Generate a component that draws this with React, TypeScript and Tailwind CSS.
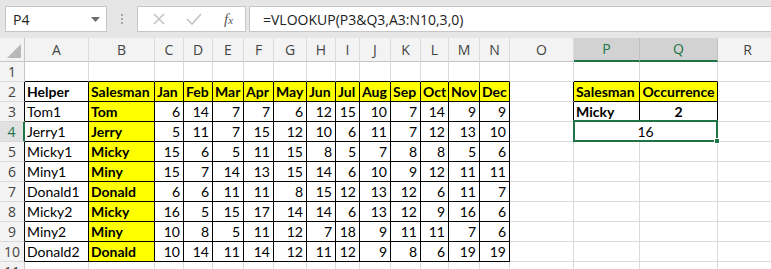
import React from "react";
import clsx from "clsx";

// sheet columns with pixel widths (index 0 is the row header)
const COLS = ["", "A", "B", "C", "D", "E", "F", "G", "H", "I", "J", "K", "L", "M", "N", "O", "P", "Q", "R"];
const MONTHS = ["Jan", "Feb", "Mar", "Apr", "May", "Jun", "Jul", "Aug", "Sep", "Oct", "Nov", "Dec"];

const DATA: [string, string, number[]][] = [
  ["Tom1", "Tom", [6, 14, 7, 7, 6, 12, 15, 10, 7, 14, 9, 9]],
  ["Jerry1", "Jerry", [5, 11, 7, 15, 12, 10, 6, 11, 7, 12, 13, 10]],
  ["Micky1", "Micky", [15, 6, 5, 11, 15, 8, 5, 7, 8, 8, 5, 6]],
  ["Miny1", "Miny", [15, 7, 14, 13, 15, 14, 6, 10, 9, 12, 11, 11]],
  ["Donald1", "Donald", [6, 6, 11, 11, 8, 15, 12, 13, 12, 6, 11, 7]],
  ["Micky2", "Micky", [16, 5, 15, 17, 14, 14, 6, 13, 12, 9, 16, 6]],
  ["Miny2", "Miny", [10, 8, 5, 11, 12, 7, 18, 9, 11, 11, 7, 6]],
  ["Donald2", "Donald", [10, 14, 11, 14, 12, 11, 12, 9, 8, 6, 19, 19]],
];

type CellData = { text?: string | number; bold?: boolean; align?: "left" | "right" | "center"; yellow?: boolean };

// which cells carry the black "all borders" format
function inTable(r: number, c: number) {
  if (r >= 2 && r <= 10 && c >= 1 && c <= 14) return true;
  if (r >= 2 && r <= 3 && (c === 16 || c === 17)) return true;
  return false;
}

function cellAt(r: number, c: number): CellData {
  if (r === 2) {
    if (c === 1) return { text: "Helper", bold: true };
    if (c === 2) return { text: "Salesman", bold: true, yellow: true };
    if (c >= 3 && c <= 14) return { text: MONTHS[c - 3], bold: true, yellow: true };
    if (c === 16) return { text: "Salesman", bold: true, yellow: true };
    if (c === 17) return { text: "Occurrence", bold: true, yellow: true, align: "center" };
  }
  if (r >= 3 && r <= 10) {
    const [helper, name, nums] = DATA[r - 3];
    if (c === 1) return { text: helper };
    if (c === 2) return { text: name, bold: true, yellow: true };
    if (c >= 3 && c <= 14) return { text: nums[c - 3], align: "right" };
  }
  if (r === 3 && c === 16) return { text: "Micky", bold: true };
  if (r === 3 && c === 17) return { text: 2, bold: true, align: "center" };
  return {};
}

function Cell({ r, c }: { r: number; c: number }) {
  const d = cellAt(r, c);
  const blackRight = inTable(r, c) || inTable(r, c + 1);
  const blackBottom = inTable(r, c) || inTable(r + 1, c);
  return (
    <div
      className={clsx(
        "h-5 border-r border-b flex items-center overflow-hidden whitespace-nowrap text-[14px] leading-none text-black",
        blackRight ? "border-r-black" : "border-r-[#dadada]",
        blackBottom ? "border-b-black" : "border-b-[#dadada]",
        d.yellow ? "bg-[#ffff00]" : "bg-white",
        d.bold && "font-bold",
        d.align === "right" ? "justify-end pr-[3px]" : d.align === "center" ? "justify-center" : "pl-[2px]"
      )}
    >
      {d.text}
    </div>
  );
}

function RowHeader({ r }: { r: number }) {
  const active = r === 4;
  return (
    <div
      className={clsx(
        "h-5 border-b border-b-[#dadada] flex items-center justify-center text-[14px] font-['Open_Sans'] leading-none",
        active ? "bg-[#e1e1e1] text-[#217346] border-r-2 border-r-[#217346]" : "bg-[#f3f3f3] text-[#444] border-r",
        !active && (inTable(r, 1) ? "border-r-black" : "border-r-[#c6c6c6]")
      )}
    >
      {r}
    </div>
  );
}

function ColHeader({ label, idx }: { label: string; idx: number }) {
  const active = idx === 16 || idx === 17;
  if (idx === 0) {
    return (
      <div className="h-6 bg-[#f3f3f3] border-r border-b border-[#c6c6c6] flex items-end justify-end p-[3px]">
        <svg width="14" height="14" viewBox="0 0 14 14">
          <polygon points="14,0 14,14 0,14" fill="#b8b8b8" />
        </svg>
      </div>
    );
  }
  return (
    <div
      className={clsx(
        "h-6 border-r flex items-center justify-center text-[14px] font-['Open_Sans'] leading-none",
        active
          ? "bg-[#d2d2d2] text-[#217346] border-r-[#bfbfbf] border-b-2 border-b-[#217346]"
          : "bg-[#f3f3f3] text-[#444] border-r-[#dadada] border-b border-b-[#c6c6c6]"
      )}
    >
      {label}
    </div>
  );
}

function FormulaBar() {
  return (
    <div className="h-[38px] bg-[#e6e6e6] flex items-start pt-[6px] pl-[5px] gap-0 font-['Open_Sans']">
      <div className="w-[102px] h-[26px] bg-white border border-[#c6c6c6] flex items-center justify-between pl-[7px] pr-[6px] text-[14px] text-[#222]">
        <span>P4</span>
        <svg width="9" height="5" viewBox="0 0 9 5">
          <polygon points="0,0 9,0 4.5,5" fill="#6d6d6d" />
        </svg>
      </div>
      <div className="w-[30px] h-[26px] flex flex-col items-center justify-center gap-[2px]">
        <span className="w-[2px] h-[2px] bg-[#a6a6a6]" />
        <span className="w-[2px] h-[2px] bg-[#a6a6a6]" />
        <span className="w-[2px] h-[2px] bg-[#a6a6a6]" />
      </div>
      <div className="w-[109px] h-[26px] bg-white border border-[#c6c6c6] flex items-center pl-[14px]">
        <svg width="14" height="14" viewBox="0 0 14 14" className="mr-[20px]">
          <path d="M2 2 L12 12 M12 2 L2 12" stroke="#c3c3c3" strokeWidth="1.6" />
        </svg>
        <svg width="16" height="14" viewBox="0 0 16 14">
          <path d="M1 7 L6 12 L15 2" stroke="#c3c3c3" strokeWidth="1.6" fill="none" />
        </svg>
        <span className="ml-[22px] font-['Liberation_Serif'] italic text-[15px] text-[#555] leading-none">
          f<span className="text-[11px]">x</span>
        </span>
      </div>
      <div className="flex-1 h-[26px] ml-[3px] bg-white border border-[#c6c6c6] border-r-0 flex items-center pl-[13px] text-[14px] text-[#222]">
        =VLOOKUP(P3&amp;Q3,A3:N10,3,0)
      </div>
    </div>
  );
}

export default function App() {
  const rows = Array.from({ length: 11 }, (_, i) => i + 1);
  return (
    <div className="w-[771px] h-[269px] overflow-hidden bg-white font-['Lato','Liberation_Sans',sans-serif]">
      <FormulaBar />
      <div className="grid grid-cols-[25px_64px_66px_29px_29px_31px_30px_33px_29px_24px_31px_30px_28px_31px_30px_64px_66px_78px_60px]">
        {COLS.map((label, idx) => (
          <ColHeader key={"h" + idx} label={label} idx={idx} />
        ))}
        {rows.map((r) => (
          <React.Fragment key={r}>
            <RowHeader r={r} />
            {COLS.slice(1).map((_, i) => {
              const c = i + 1;
              if (r === 4 && c === 17) return null;
              if (r === 4 && c === 16) {
                // merged P4:Q4, the active cell
                return (
                  <div
                    key={c}
                    className="col-span-2 relative h-5 bg-white border-r border-b border-[#dadada] flex items-center justify-center text-[14px] leading-none"
                  >
                    16
                    <div className="absolute -left-px -top-[2px] -right-px -bottom-px border-2 border-[#217346]" />
                    <div className="absolute -right-[3px] -bottom-[3px] w-[6px] h-[6px] bg-[#217346] border border-white" />
                  </div>
                );
              }
              return <Cell key={c} r={r} c={c} />;
            })}
          </React.Fragment>
        ))}
      </div>
    </div>
  );
}
